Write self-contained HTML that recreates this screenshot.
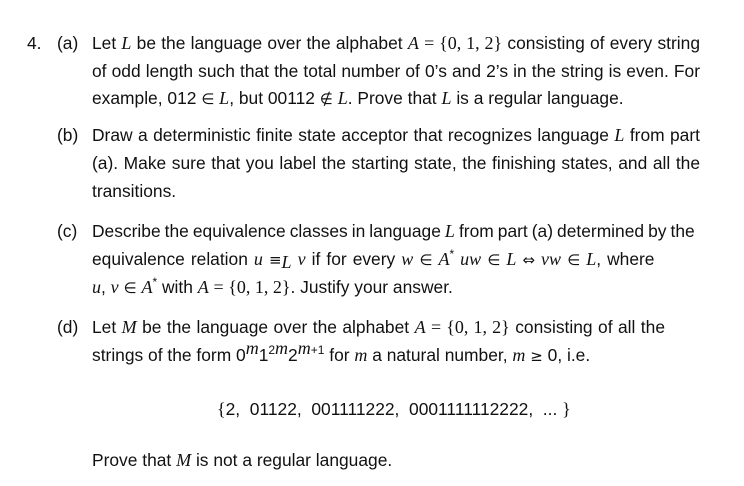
<!DOCTYPE html>
<html><head><meta charset="utf-8"><style>
body{margin:0;width:744px;height:486px;background:#fff;font-family:"Liberation Sans",sans-serif;font-size:17.4px;color:#111;position:relative;overflow:hidden}
.l{position:absolute;white-space:nowrap;line-height:20px}
.j{width:608px;text-align:justify;text-align-last:justify;white-space:normal}
i{font-family:"Liberation Serif",serif;font-size:18px}
.m{font-family:"Liberation Serif",serif;font-size:18px}
.d{font-family:"DejaVu Sans",sans-serif;font-size:15px}
sup{font-size:12px;line-height:0}
sub{font-size:12px;line-height:0;vertical-align:-3px}
</style></head><body>
<div class="l" style="left:27px;top:33px">4.</div>
<div class="l" style="left:57px;top:33px">(a)</div>
<div class="l j" style="left:92px;top:33px">Let <i>L</i> be the language over the alphabet <i>A</i> <span class="m">= {0, 1, 2}</span> consisting of every string</div>
<div class="l j" style="left:92px;top:61px">of odd length such that the total number of 0’s and 2’s in the string is even. For</div>
<div class="l" style="left:92px;top:88px">example, 012 <span class="d">∈</span> <i>L</i>, but 00112 <span class="d">∉</span> <i>L</i>. Prove that <i>L</i> is a regular language.</div>
<div class="l" style="left:57px;top:125px">(b)</div>
<div class="l j" style="left:92px;top:125px">Draw a deterministic finite state acceptor that recognizes language <i>L</i> from part</div>
<div class="l j" style="left:92px;top:153px">(a). Make sure that you label the starting state, the finishing states, and all the</div>
<div class="l" style="left:92px;top:181px">transitions.</div>
<div class="l" style="left:57px;top:221px">(c)</div>
<div class="l" style="left:92px;top:221px;word-spacing:-0.8px">Describe the equivalence classes in language <i>L</i> from part (a) determined by the</div>
<div class="l" style="left:92px;top:249px;word-spacing:1.2px">equivalence relation <i>u</i> <span class="d">≡<sub><i>L</i></sub></span> <i>v</i> if for every <i>w</i> <span class="d">∈</span> <i>A</i><sup>*</sup> <i>uw</i> <span class="d">∈</span> <i>L</i> <span class="d">⇔</span> <i>vw</i> <span class="d">∈</span> <i>L</i>, where</div>
<div class="l" style="left:92px;top:277px"><i>u</i>, <i>v</i> <span class="d">∈</span> <i>A</i><sup>*</sup> with <i>A</i> <span class="m">= {0, 1, 2}</span>. Justify your answer.</div>
<div class="l" style="left:57px;top:317px">(d)</div>
<div class="l" style="left:92px;top:317px;width:573px;text-align:justify;text-align-last:justify;white-space:normal">Let <i>M</i> be the language over the alphabet <i>A</i> <span class="m">= {0, 1, 2}</span> consisting of all the</div>
<div class="l" style="left:92px;top:345px">strings of the form 0<sup><i>m</i></sup>1<sup>2<i>m</i></sup>2<sup><i>m</i>+1</sup> for <i>m</i> a natural number, <i>m</i> <span class="d">≥</span> 0, i.e.</div>
<div class="l" style="left:217px;top:399px"><span class="m">{</span>2, &nbsp;01122, &nbsp;001111222, &nbsp;0001111112222, &nbsp;... <span class="m">}</span></div>
<div class="l" style="left:92px;top:450px">Prove that <i>M</i> is not a regular language.</div>
</body></html>
